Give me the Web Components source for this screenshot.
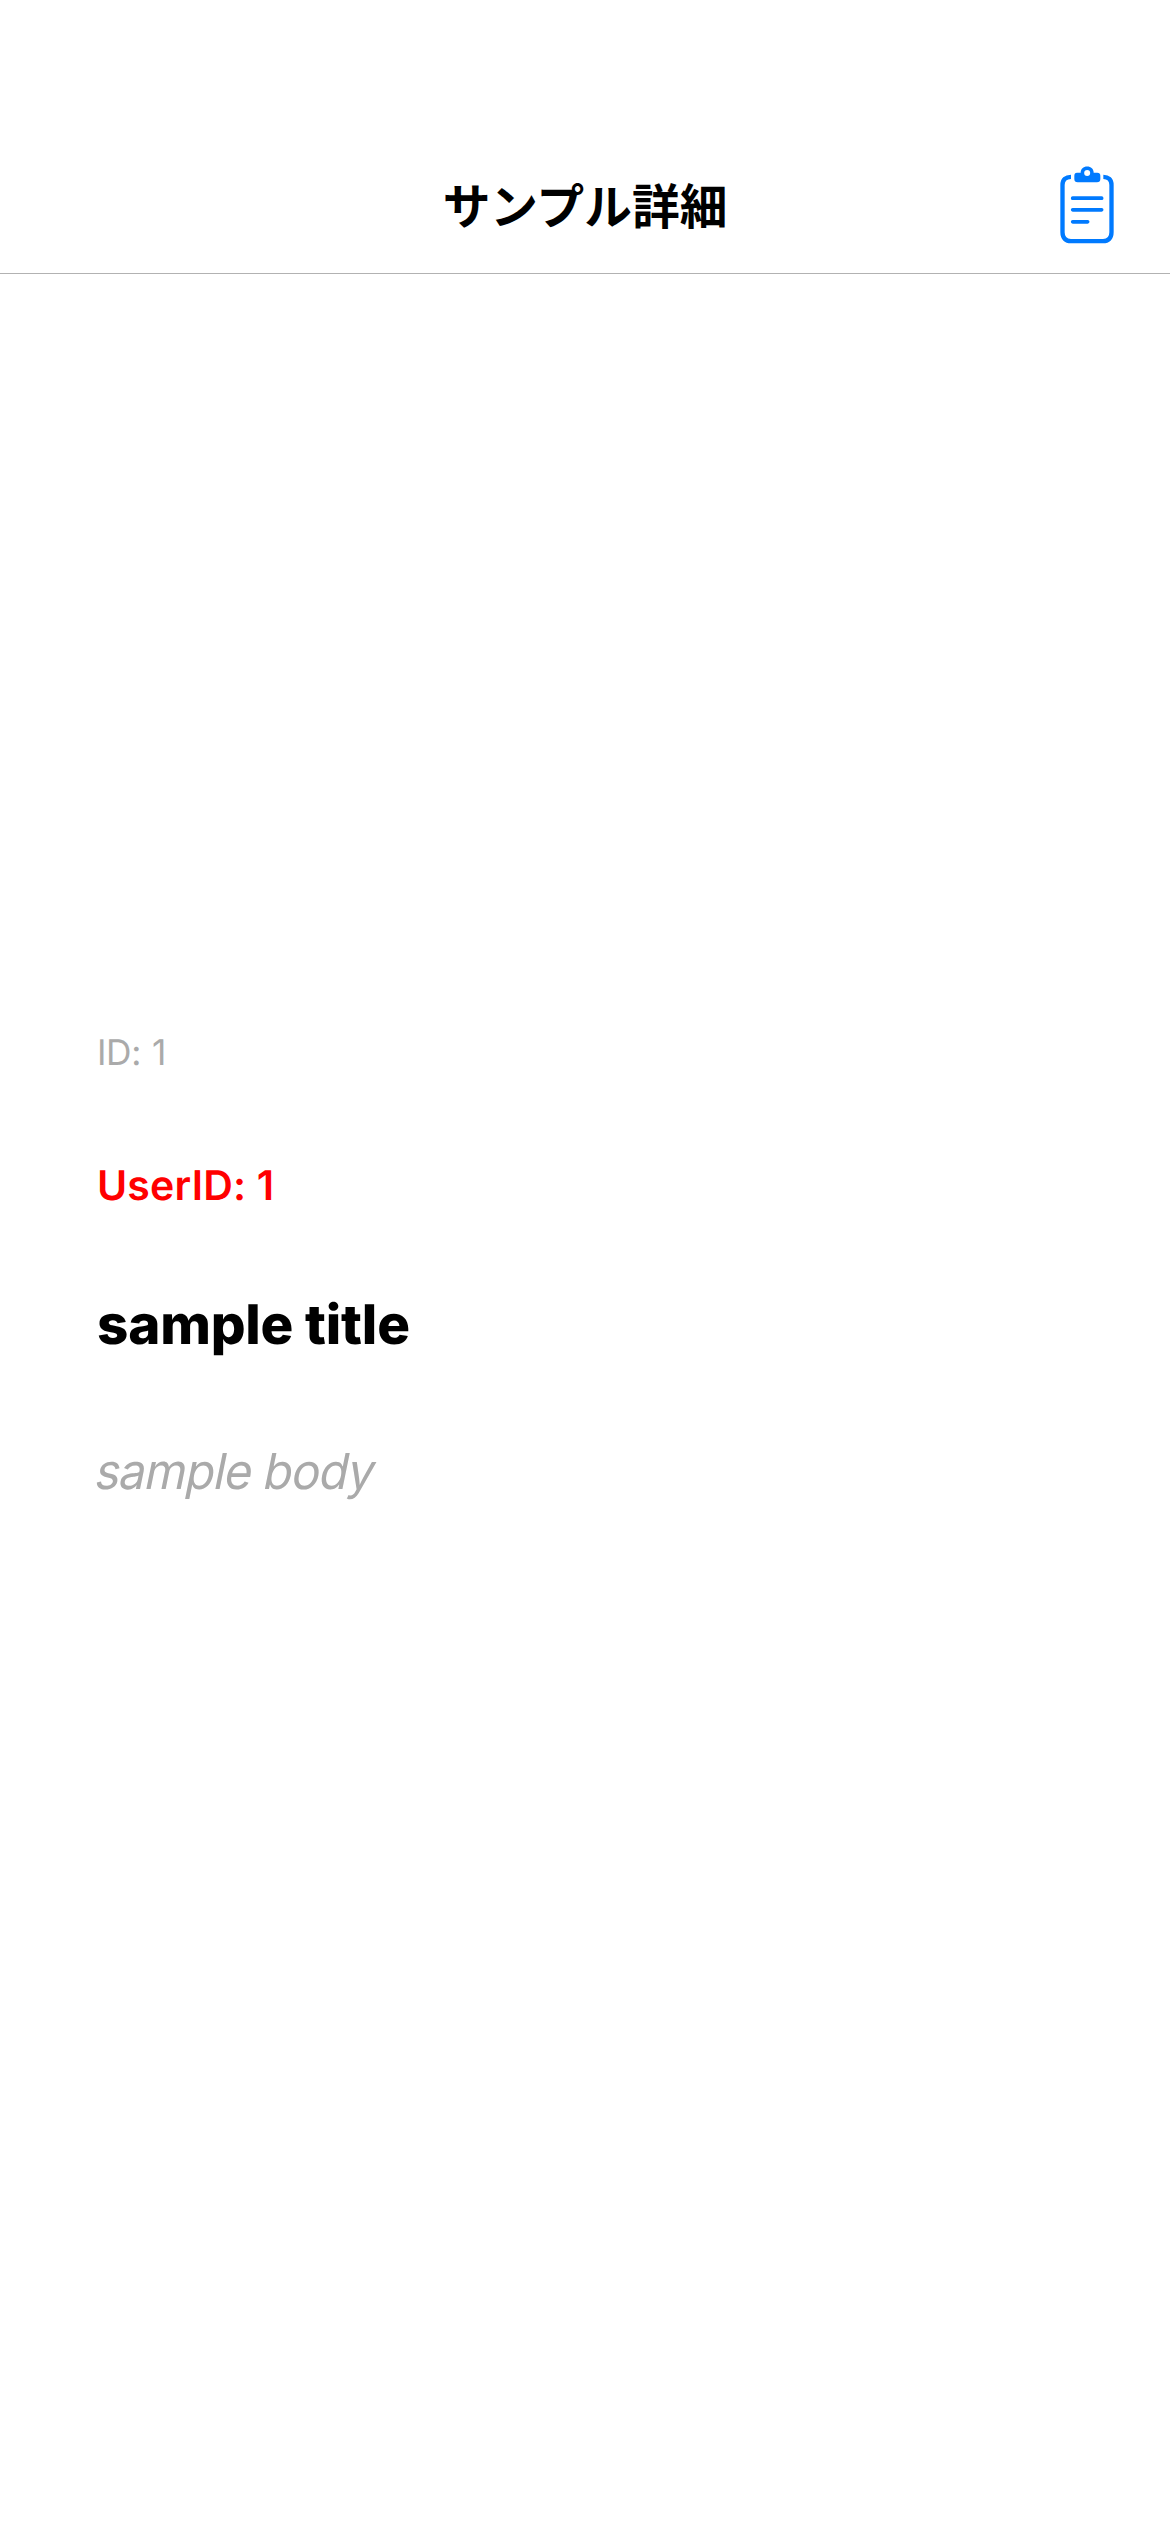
<!DOCTYPE html>
<html lang="ja">
<head>
<meta charset="utf-8">
<title>サンプル詳細</title>
<style>
html, body { margin: 0; background: #fff; }
</style>
</head>
<body>
<sample-page>
  <nav-bar slot="header">サンプル詳細<clipboard-icon slot="action"></clipboard-icon></nav-bar>
  <detail-text kind="id">ID: 1</detail-text>
  <detail-text kind="user">UserID: 1</detail-text>
  <detail-text kind="title">sample title</detail-text>
  <detail-text kind="body">sample body</detail-text>
</sample-page>
<script>
const define = (name, html) => customElements.define(name, class extends HTMLElement {
  constructor() {
    super();
    this.attachShadow({ mode: 'open' }).innerHTML = html;
  }
});

define('clipboard-icon', `
<style>
:host { display: block; width: 60px; height: 80px; }
svg { display: block; }
</style>
<svg width="60" height="80" viewBox="50 46 180 240" fill="none" stroke="#007aff">
  <path stroke-width="13" d="M92 81.5C76 81.5 66.5 90 66.5 106V248C66.5 265 76 274.5 92 274.5H188C204 274.5 213.5 265 213.5 248V106C213.5 90 204 81.5 189 81.5"/>
  <path stroke="none" fill="#007aff" fill-rule="evenodd" d="M110 69H121C121 58 129 50.500 140.500 50.500S160 58 160 69H171Q180 69 180 78V88Q180 98 170 98H112Q102 98 102 88V78Q102 69 110 69ZM140.500 61A9 9 0 1 0 140.500 79A9 9 0 1 0 140.500 61Z"/>
  <path stroke-width="11" stroke-linecap="round" d="M97 145.500H184M97 180.500H184M97 216.500H142"/>
</svg>`);

define('nav-bar', `
<style>
:host { display: grid; grid-template-columns: 1fr auto 1fr; align-items: center; box-sizing: border-box; height: 274px; padding: 137px 53px 0 53px; border-bottom: 1px solid #b2b2b2; background: #fff; }
h1 { grid-column: 2; margin: -2px 0 0; font: 700 47.700px/70px "Noto Sans CJK JP", sans-serif; color: #000; white-space: nowrap; }
::slotted(clipboard-icon) { grid-column: 3; justify-self: end; }
</style>
<h1><slot></slot></h1><slot name="action"></slot>`);

define('detail-text', `
<style>
:host { display: block; font-family: Inter, sans-serif; white-space: nowrap; text-rendering: geometricPrecision; }
:host([kind=id]) { font-size: 35.300px; line-height: 44px; color: #aaa; letter-spacing: -.4px; word-spacing: 1.6px; }
:host([kind=user]) { font-size: 41px; line-height: 50px; font-weight: 600; color: #f00; letter-spacing: .2px; }
:host([kind=title]) { margin-top: -1px; margin-bottom: 1px; font-size: 54.700px; line-height: 62px; font-weight: 800; color: #000; letter-spacing: -.2px; }
/* Upright letterforms slanted, so the two-storey "a" is kept. */
:host([kind=body]) { margin-left: -4px; font-size: 49.500px; line-height: 58px; color: #aaa; letter-spacing: -1px; transform: skewX(-11.500deg) scaleX(.96); transform-origin: 0 47px; }
</style>
<slot></slot>`);

define('sample-page', `
<style>
:host { display: flex; flex-direction: column; width: 1170px; height: 2532px; background: #fff; overflow: hidden; }
main { display: flex; flex-direction: column; align-items: flex-start; gap: 85px; padding: 757px 97px 0; }
</style>
<slot name="header"></slot>
<main><slot></slot></main>`);
</script>
</body>
</html>
